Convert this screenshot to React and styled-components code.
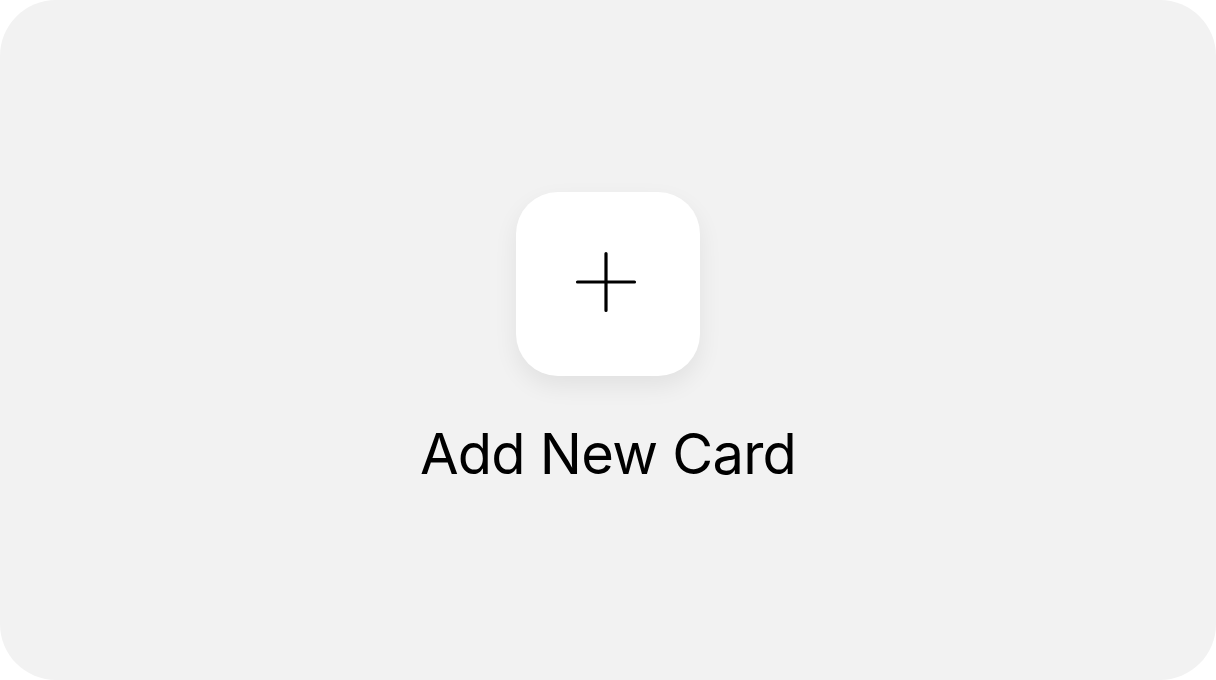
import React from 'react';
import styled, { createGlobalStyle } from 'styled-components';

const Global = createGlobalStyle`
  html, body {
    margin: 0;
    padding: 0;
    background: #fff;
  }
  body {
    font-family: Inter, "Liberation Sans", sans-serif;
  }
`;

const Card = styled.button`
  width: 1216px;
  height: 680px;
  box-sizing: border-box;
  border: none;
  border-radius: 56px;
  background: #f2f2f2;
  display: flex;
  flex-direction: column;
  align-items: center;
  padding: 192px 0 0;
  cursor: pointer;
  font-family: inherit;
`;

const IconBox = styled.div`
  width: 184px;
  height: 184px;
  border-radius: 42px;
  background: #fff;
  box-shadow: 0 10px 24px rgba(0, 0, 0, 0.07);
  display: flex;
  align-items: center;
  justify-content: center;
  svg {
    margin: -4px 0 0 -4px;
  }
`;

const Label = styled.span`
  margin-top: 44px;
  font-size: 56px;
  line-height: 68px;
  font-weight: 400;
  color: #000;
  letter-spacing: -0.75px;
`;

const PlusIcon = () => (
  <svg width="64" height="64" viewBox="0 0 64 64" fill="none">
    <path d="M32 3.5v57M3.5 32h57" stroke="#000" strokeWidth="3.2" strokeLinecap="round" />
  </svg>
);

export default function App() {
  return (
    <>
      <Global />
      <Card>
        <IconBox>
          <PlusIcon />
        </IconBox>
        <Label>Add New Card</Label>
      </Card>
    </>
  );
}
